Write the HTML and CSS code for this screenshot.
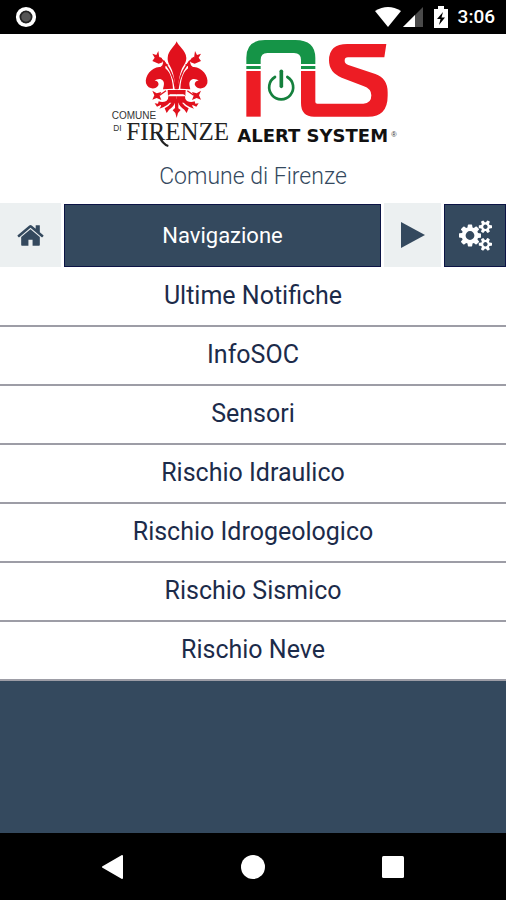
FILE: index.html
```html
<!DOCTYPE html>
<html lang="it">
<head>
<meta charset="utf-8">
<meta name="viewport" content="width=device-width, initial-scale=1">
<title>Comune di Firenze</title>
<link rel="stylesheet" href="styles.css">
</head>
<body>
<div class="status">
  <svg class="status-app" viewBox="0 0 22 22" aria-hidden="true"><circle cx="11" cy="11" r="8.300" fill="#555" stroke="#fff" stroke-width="3.600"/><circle cx="11" cy="11" r="5.500" fill="none" stroke="#222" stroke-width="1.500"/></svg>
  <div class="status-right">
    <svg class="wifi" viewBox="0 0 26 20" aria-hidden="true"><path d="M0 4Q13-4 26 4L13 20Z" fill="#fff"/></svg>
    <svg class="signal" viewBox="0 0 20 20" aria-hidden="true"><path d="M0 20L20 0V20Z" fill="#4a4a4a"/><path d="M0 20L12 8V20Z" fill="#fff"/></svg>
    <svg class="battery" viewBox="0 0 14 22" aria-hidden="true"><path d="M4 0H10V3H14V22H0V3H4Z" fill="#fff"/><path d="M9 6L3 13H6.500L5 19L11 11.500H7.500Z" fill="#000"/></svg>
    <span class="clock">3:06</span>
  </div>
</div>
<header class="header">
  <div class="logos">
    <svg class="logo-firenze" viewBox="0 0 381 345" role="img" aria-label="Comune di Firenze">
      <defs>
        <g id="fleur-half">
          <path d="M204 158C202 118 189 91 163 93C139 95 119 119 123 142C129 160 151 163 160 148C163 139 155 133 149 134C155 129 168 126 174 134C180 142 175 152 174 160Z"/>
          <path d="M211 159C207 121 190 87 163 64" fill="none" stroke="#e1111d" stroke-width="4"/>
          <path d="M173 79L170 65L163 66L160 45L154 57L142 53L149 65L142 75L161 83Z"/>
          <path d="M172 88L177 72L184 83L191 87L181 91L181 101L172 95L163 96Z"/>
          <path d="M142 164L155 172L169 168L164 179L169 192L155 186L142 191L148 178Z"/>
          <path d="M164 178L183 164" stroke="#e1111d" stroke-width="4"/>
          <path d="M188 162H216V175H195L189 181Z"/>
          <path d="M215 181H190Q191 191 184 195Q173 200 161 196L159 203L149 202L156 212L167 207Q171 208 163 218L176 213Q186 209 194 200L199 200Q192 210 179 217L185 231L192 221Q207 210 210 200L215 198Z"/>
        </g>
      </defs>
      <g fill="#e1111d">
        <path d="M215 16C219 31 243 42 244 66C244 82 234 88 229 103C224 117 220 136 219 160H211C210 136 206 117 201 103C196 88 187 81 188 66C189 42 211 31 215 16Z"/>
        <use href="#fleur-half"/>
        <use href="#fleur-half" transform="translate(430 0) scale(-1 1)"/>
        <path d="M210 188H220V217L227 222L219 231L215 246L211 231L203 223L210 216Z"/>
      </g>
      <path d="M190 178H240" stroke="#fff" stroke-width="3"/>
      <text class="mark-small" x="20" y="250">COMUNE</text>
      <text class="mark-di" x="25" y="284">DI</text>
      <text class="mark-firenze" x="64" y="313">FIRENZE</text>
      <path d="M154 287C166 306 171 325 190 330" fill="none" stroke="#222" stroke-width="6"/>
    </svg>
    <svg class="logo-alert" viewBox="0 0 510 345" role="img" aria-label="Alert System">
      <path d="M43 84V65Q43 12 99 12H190Q250 12 250 66V84H207V72Q207 51 186 51H106Q86 51 86 72V84ZM43 90H86V99H43ZM207 90H250V99H207Z" fill="#159447"/>
      <path d="M43 105H86V242H43Z" fill="#ed1c24"/>
      <path d="M207 105H250V198Q250 203 256 203H394Q418 203 418 178Q418 158 394 150L329 125Q291 110 291 73Q291 24 346 24H463L457 64H348Q338 64 338 74Q338 83 349 87L430 114Q467 127 467 169V179Q467 242 408 242H246Q207 242 207 201Z" fill="#ed1c24"/>
      <g fill="none" stroke="#15803d" stroke-linecap="round">
        <path d="M129 123A36 36 0 1 0 166 123" stroke-width="8"/>
        <path d="M148 106V151" stroke-width="11"/>
      </g>
      <text class="mark-alert" x="16" y="318">ALERT SYSTEM</text>
      <text class="mark-reg" x="478" y="304">®</text>
    </svg>
  </div>
  <h1 class="title">Comune di Firenze</h1>
</header>
<nav class="toolbar" aria-label="Principale">
  <button class="tool" type="button" aria-label="Home">
    <svg class="icon-home" viewBox="0 0 1792 1792" aria-hidden="true"><path fill="currentColor" d="M1472 992v480q0 26-19 45t-45 19h-384v-384h-256v384h-384q-26 0-45-19t-19-45v-480q0-1 .5-3t.5-3l575-474 575 474q1 2 1 6zm223-69l-62 74q-8 9-21 11h-3q-13 0-21-7l-692-577-692 577q-12 8-24 7-13-2-21-11l-62-74q-8-10-7-23.500t11-21.500l719-599q32-26 76-26t76 26l244 204v-195q0-14 9-23t23-9h192q14 0 23 9t9 23v408l219 182q10 8 11 21.500t-7 23.500z"/></svg>
  </button>
  <button class="tool tool-dark tool-wide" type="button">Navigazione</button>
  <button class="tool tool-play" type="button" aria-label="Avanti">
    <svg class="icon-play" viewBox="0 0 24 26" aria-hidden="true"><path fill="currentColor" d="M0 0L24 13L0 26Z"/></svg>
  </button>
  <button class="tool tool-dark tool-cogs" type="button" aria-label="Impostazioni">
    <svg class="icon-cogs" viewBox="0 0 1920 1792" aria-hidden="true"><path fill="currentColor" d="M896 896q0-106-75-181t-181-75-181 75-75 181 75 181 181 75 181-75 75-181zm768 512q0-52-38-90t-90-38-90 38-38 90q0 53 37.500 90.500t90.500 37.500 90.500-37.500 37.500-90.500zm0-1024q0-52-38-90t-90-38-90 38-38 90q0 53 37.500 90.500t90.500 37.500 90.500-37.500 37.500-90.500zm-384 421v185q0 10-7 19.500t-16 10.500l-155 24q-11 35-32 76 34 48 90 115 7 11 7 20 0 12-7 19-23 30-82.500 89.500t-78.500 59.500q-11 0-21-7l-115-90q-37 19-77 31-11 108-23 155-7 24-30 24h-186q-11 0-20-7.500t-10-17.500l-23-153q-34-10-75-31l-118 89q-7 7-20 7-11 0-21-8-144-133-144-160 0-9 7-19 10-14 41-53t47-61q-23-44-35-82l-152-24q-10-1-17-9.500t-7-19.500v-185q0-10 7-19.500t16-10.500l155-24q11-35 32-76-34-48-90-115-7-11-7-20 0-12 7-20 22-30 82-89t79-59q11 0 21 7l115 90q34-18 77-32 11-108 23-154 7-24 30-24h186q11 0 20 7.500t10 17.500l23 153q34 10 75 31l118-89q8-7 20-7 11 0 21 8 144 133 144 160 0 8-7 19-12 16-42 54t-45 60q23 48 34 82l152 23q10 2 17 10.500t7 19.500zm640 533v140q0 16-149 31-12 27-30 52 51 113 51 138 0 4-4 7-122 71-124 71-8 0-46-47t-52-68q-20 2-30 2t-30-2q-14 21-52 68t-46 47q-2 0-124-71-4-3-4-7 0-25 51-138-18-25-30-52-149-15-149-31v-140q0-16 149-31 13-29 30-52-51-113-51-138 0-4 4-7 4-2 35-20t59-34 30-16q8 0 46 46.500t52 67.500q20-2 30-2t30 2q51-71 92-112l6-2q4 0 124 70 4 3 4 7 0 25-51 138 17 23 30 52 149 15 149 31zm0-1024v140q0 16-149 31-12 27-30 52 51 113 51 138 0 4-4 7-122 71-124 71-8 0-46-47t-52-68q-20 2-30 2t-30-2q-14 21-52 68t-46 47q-2 0-124-71-4-3-4-7 0-25 51-138-18-25-30-52-149-15-149-31v-140q0-16 149-31 13-29 30-52-51-113-51-138 0-4 4-7 4-2 35-20t59-34 30-16q8 0 46 46.500t52 67.500q20-2 30-2t30 2q51-71 92-112l6-2q4 0 124 70 4 3 4 7 0 25-51 138 17 23 30 52 149 15 149 31z"/></svg>
  </button>
</nav>
<main class="content">
  <ul class="menu">
    <li><a href="#notifiche">Ultime Notifiche</a></li>
    <li><a href="#infosoc">InfoSOC</a></li>
    <li><a href="#sensori">Sensori</a></li>
    <li><a href="#idraulico">Rischio Idraulico</a></li>
    <li><a href="#idrogeologico">Rischio Idrogeologico</a></li>
    <li><a href="#sismico">Rischio Sismico</a></li>
    <li><a href="#neve">Rischio Neve</a></li>
  </ul>
</main>
<footer class="system">
  <button type="button" aria-label="Indietro"><svg viewBox="0 0 24 24" aria-hidden="true"><path d="M2 12L21 1V23Z" fill="#fff" stroke="#fff" stroke-width="2" stroke-linejoin="round"/></svg></button>
  <button type="button" aria-label="Schermata iniziale"><svg viewBox="0 0 24 24" aria-hidden="true"><circle cx="12" cy="12" r="12" fill="#fff"/></svg></button>
  <button type="button" aria-label="App recenti"><svg viewBox="0 0 24 24" aria-hidden="true"><rect x="1" y="1" width="22" height="22" rx="1.500" fill="#fff"/></svg></button>
</footer>
</body>
</html>
```
FILE: styles.css
```css
* {
  box-sizing: border-box;
}

body {
  margin: 0;
  min-height: 100vh;
  display: flex;
  flex-direction: column;
  background: #34495e;
  color: #1c2b4a;
  font-family: Roboto, "Liberation Sans", sans-serif;
}

svg {
  display: block;
}

button {
  margin: 0;
  padding: 0;
  border: 0;
  background: none;
  color: inherit;
  font: inherit;
}

.status {
  display: flex;
  align-items: center;
  justify-content: space-between;
  height: 34px;
  padding: 0 11px 0 15px;
  background: #000;
  color: #fff;
}

.status-app {
  width: 22px;
  height: 22px;
}

.status-right {
  display: flex;
  align-items: center;
}

.wifi {
  width: 26px;
  height: 20px;
}

.signal {
  width: 20px;
  height: 20px;
  margin-left: 2px;
}

.battery {
  width: 14px;
  height: 22px;
  margin: 0 10px 0 11px;
}

.clock {
  font-size: 19px;
  font-weight: 500;
  line-height: 36px;
}

.header {
  padding-top: 2px;
  background: #fff;
}

.logos {
  display: flex;
  justify-content: center;
}

.logo-firenze {
  width: 127px;
  height: 115px;
}

.logo-alert {
  width: 170px;
  height: 115px;
}

.mark-small,
.mark-di {
  font-family: "Liberation Sans", sans-serif;
  font-size: 30px;
  fill: #333;
}

.mark-di {
  font-size: 25px;
}

.mark-firenze {
  font-family: "Liberation Serif", serif;
  font-size: 75px;
  fill: #222;
}

.mark-alert {
  font-family: "DejaVu Sans", sans-serif;
  font-size: 54px;
  font-weight: 700;
  fill: #111;
}

.mark-reg {
  font-family: "Liberation Sans", sans-serif;
  font-size: 22px;
  fill: #333;
}

.title {
  margin: 0;
  font-size: 23px;
  font-weight: 300;
  line-height: 52px;
  text-align: center;
  color: #34495e;
}

.toolbar {
  display: grid;
  grid-template-columns: 61px 1fr 57px 62px;
  column-gap: 3px;
  height: 64px;
  background: #fff;
}

.tool {
  display: flex;
  align-items: center;
  justify-content: center;
  background: #ecf0f1;
  color: #34495e;
}

.tool-dark {
  margin-top: 1px;
  border: 1px solid #0c1445;
  background: #34495e;
  color: #fff;
}

.tool-wide {
  font-size: 22px;
}

.icon-home {
  width: 29px;
  height: 29px;
}

.icon-play {
  width: 24px;
  height: 26px;
}

.icon-cogs {
  width: 33px;
  height: 31px;
}

.content {
  flex: 1;
}

.menu {
  margin: 0;
  padding: 1px 0 0;
  list-style: none;
  background: #fff;
}

.menu a {
  display: block;
  height: 59px;
  border-bottom: 2px solid #9d9da6;
  font-size: 25px;
  line-height: 56px;
  text-align: center;
  text-decoration: none;
  color: inherit;
}

.system {
  display: flex;
  align-items: center;
  justify-content: space-between;
  height: 67px;
  padding: 0 20%;
  background: #000;
}

.system svg {
  width: 24px;
  height: 24px;
}
```
